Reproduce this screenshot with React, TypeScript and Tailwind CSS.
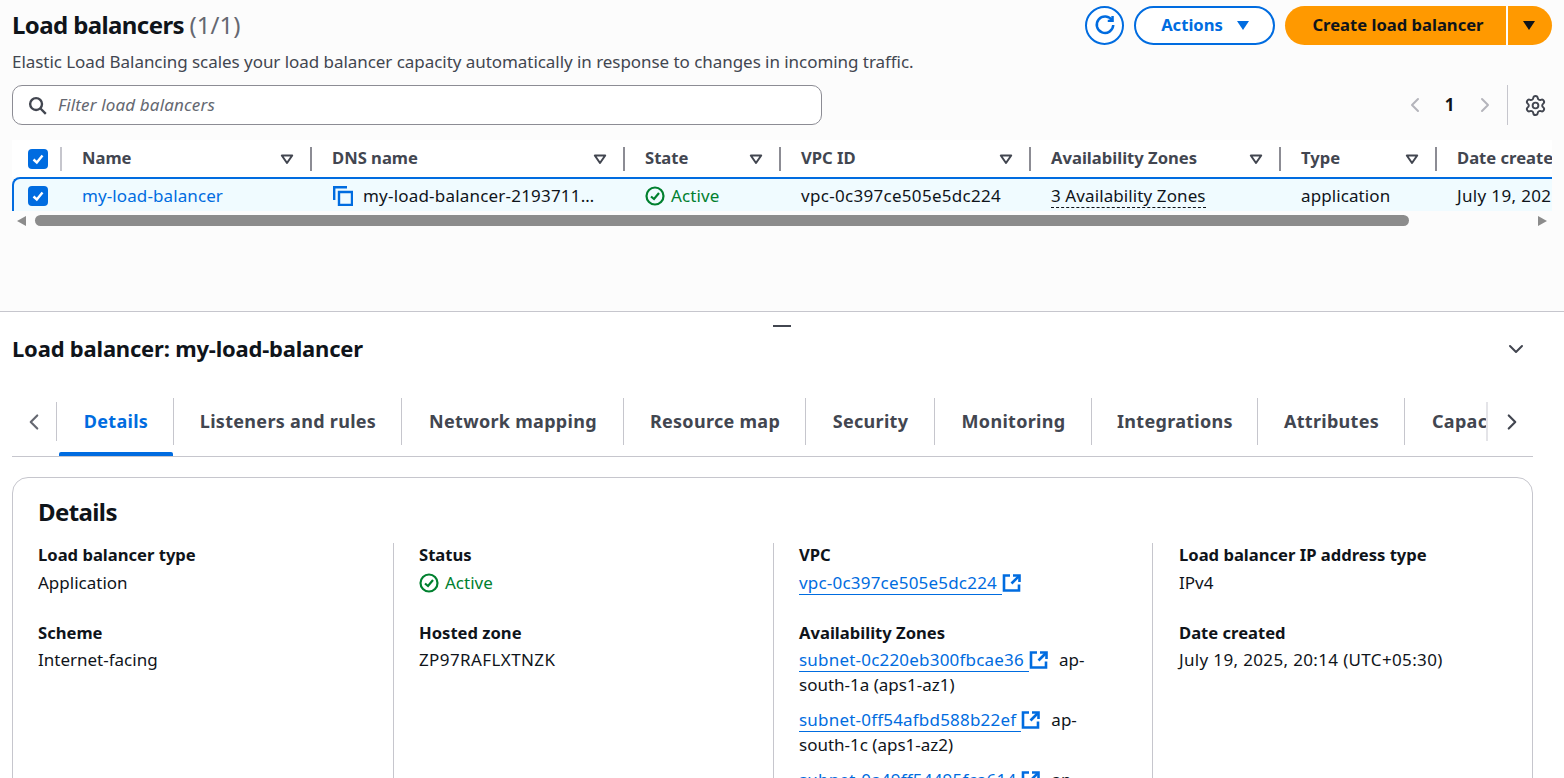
import { ChevronDown, ChevronLeft, ChevronRight, Settings } from "lucide-react";

const font = "font-['Noto_Sans',sans-serif]";

function Caret({ className }: { className?: string }) {
  return (
    <svg viewBox="0 0 16 16" className={className} fill="currentColor">
      <path d="M2 4h12L8 13z" />
    </svg>
  );
}

function SortIcon() {
  return (
    <svg viewBox="0 0 16 16" className="h-4 w-4 text-[#424650]" fill="none" stroke="currentColor" strokeWidth="2" strokeLinejoin="round">
      <path d="M2.8 4.5h10.4L8 12z" />
    </svg>
  );
}

function Check() {
  return (
    <span className="flex h-5 w-5 items-center justify-center rounded-[4px] bg-[#006ce0]">
      <svg viewBox="0 0 16 16" className="h-4 w-4" fill="none" stroke="white" strokeWidth="2.4">
        <path d="M3.5 8.5 6.8 11.5 12.5 4.5" />
      </svg>
    </span>
  );
}

function StatusActive() {
  return (
    <span className="flex items-center gap-[6px] text-[#00802f]">
      <svg viewBox="0 0 20 20" className="h-5 w-5" fill="none" stroke="currentColor" strokeWidth="2.2">
        <circle cx="10" cy="10" r="8.5" />
        <path d="M6 10.5 9 13l5-6" />
      </svg>
      Active
    </span>
  );
}

function External() {
  return (
    <svg viewBox="0 0 20 20" className="inline-block h-5 w-5 align-[-4px] text-[#006ce0]" fill="none" stroke="currentColor" strokeWidth="2.6">
      <path d="M8 2.5H2v15h15v-6" />
      <path d="M11 2.5h6.5V9" />
      <path d="M17 3 9.5 10.5" />
    </svg>
  );
}

function ExtLink({ text }: { text: string }) {
  return (
    <>
      <span className="border-b border-[#006ce0] tracking-[0.2px] text-[#006ce0]">{text} </span>
      <External />
    </>
  );
}

const headers = [
  { label: "Name", w: "w-[250px]" },
  { label: "DNS name", w: "w-[313px]" },
  { label: "State", w: "w-[156px]" },
  { label: "VPC ID", w: "w-[250px]" },
  { label: "Availability Zones", w: "w-[250px]" },
  { label: "Type", w: "w-[156px]" },
];

const tabs = [
  { label: "Listeners and rules", w: "w-[228px]" },
  { label: "Network mapping", w: "w-[222px]" },
  { label: "Resource map", w: "w-[182px]" },
  { label: "Security", w: "w-[129px]" },
  { label: "Monitoring", w: "w-[157px]" },
  { label: "Integrations", w: "w-[166px]" },
  { label: "Attributes", w: "w-[147px]" },
];

function Field({ label, first, children, className }: { label: string; first?: boolean; children: React.ReactNode; className?: string }) {
  return (
    <div className={className}>
      <div className={`${first ? "h-[27px]" : "h-[26px]"} text-[16.6px] font-bold leading-[24px] text-[#0f141a]`}>{label}</div>
      <div className="leading-[25px] text-[#0f141a]">{children}</div>
    </div>
  );
}

export default function App() {
  return (
    <div className={`${font} h-[778px] w-[1564px] overflow-hidden bg-white text-[17px] text-[#0f141a]`}>
      <section className="h-[312px] border-b border-[#c6c6cd] bg-[#fcfcfc] pl-3 pr-3">
        <div className="flex h-[51px] items-center justify-between pb-[1px]">
          <h1 className="text-[24px] font-bold tracking-[-0.6px]">
            Load balancers <span className="font-normal tracking-normal text-[#656871]">(1/1)</span>
          </h1>
          <div className="flex items-center text-[16.6px]">
            <span className="flex h-[39px] w-[39px] items-center justify-center rounded-full border-2 border-[#006ce0] bg-white text-[#006ce0]">
              <svg viewBox="0 0 16 16" className="h-[22px] w-[22px]" fill="none" stroke="currentColor" strokeWidth="1.8">
                <path d="M10 5h3.5V1.5" />
                <path d="M13.2 4.8A6 6 0 1 0 14 8" />
              </svg>
            </span>
            <span className="ml-[10px] flex h-[39px] w-[141px] items-center justify-center gap-[12px] rounded-full border-2 border-[#006ce0] bg-white pl-[3px] font-bold text-[#006ce0]">
              Actions
              <Caret className="h-4 w-4" />
            </span>
            <span className="ml-[10px] flex h-[39px] w-[221px] items-center justify-center rounded-l-full bg-[#ff9900] pl-[5px] font-bold">
              Create load balancer
            </span>
            <span className="ml-[2px] flex h-[39px] w-[44px] items-center justify-center rounded-r-full bg-[#ff9900]">
              <Caret className="mr-[2px] h-4 w-4" />
            </span>
          </div>
        </div>
        <p className="h-[22px] leading-[22px] tracking-[-0.05px] text-[#424650]">
          Elastic Load Balancing scales your load balancer capacity automatically in response to changes in incoming traffic.
        </p>
        <div className="mt-[6px] flex h-[52px] items-center">
          <div className="flex h-[40px] w-[810px] items-center gap-[11px] rounded-[10px] border border-[#8c8c94] bg-white pl-[15px]">
            <svg viewBox="0 0 16 16" className="h-[19px] w-[19px] text-[#424650]" fill="none" stroke="currentColor" strokeWidth="2">
              <circle cx="6.8" cy="6.8" r="5" />
              <path d="m10.5 10.5 4.5 4.5" />
            </svg>
            <span className="italic tracking-[0.15px] text-[#656871]">Filter load balancers</span>
          </div>
          <div className="ml-auto mr-[5px] flex items-center">
            <ChevronLeft className="h-6 w-6 text-[#b4b4bb]" />
            <span className="w-[45px] text-center font-bold">1</span>
            <ChevronRight className="ml-[1px] h-6 w-6 text-[#b4b4bb]" />
            <span className="ml-[10px] h-[40px] w-px bg-[#c6c6cd]" />
            <Settings className="ml-[16px] h-[23px] w-[23px] text-[#424650]" strokeWidth={2} />
          </div>
        </div>
        <div className="mt-[9px] w-[1540px] overflow-hidden">
          <div className="flex h-[37px] w-[1800px] items-center bg-white text-[16.6px]">
            <div className="flex h-[24px] w-[50px] shrink-0 items-center justify-between border-r-2 border-[#c6c6cd] pl-4">
              <Check />
              <span />
            </div>
            {headers.map((h) => (
              <div key={h.label} className={`${h.w} flex h-[24px] shrink-0 items-center justify-between border-r-2 border-[#8c8c94] pl-5 pr-[15px] font-bold text-[#424650]`}>
                {h.label}
                <SortIcon />
              </div>
            ))}
            <div className="whitespace-nowrap pl-5 font-bold text-[#424650]">Date created</div>
          </div>
          <div className="flex h-[34px] w-[1800px] items-center rounded-tl-[8px] border-l-2 border-t-2 border-[#006ce0] bg-[#f0fbff] pt-[1px] tracking-[0.1px]">
            <div className="w-[48px] shrink-0 pl-[14px]">
              <Check />
            </div>
            <div className="w-[250px] shrink-0 pl-5 text-[#006ce0]">my-load-balancer</div>
            <div className="flex w-[313px] shrink-0 items-center pl-[21px]">
              <svg viewBox="0 0 20 20" className="mr-[10px] h-5 w-5 shrink-0 text-[#006ce0]" fill="none" stroke="currentColor" strokeWidth="2.4">
                <path d="M1.2 14V1.2H14" />
                <path d="M6 6h13v13H6z" />
              </svg>
              <span className="w-[237px] truncate tracking-[0.2px]">my-load-balancer-2193711234.ap-south-1.elb.amazonaws.com</span>
            </div>
            <div className="w-[156px] shrink-0 pl-5">
              <StatusActive />
            </div>
            <div className="w-[250px] shrink-0 pl-5 tracking-[0.3px]">vpc-0c397ce505e5dc224</div>
            <div className="w-[250px] shrink-0 pl-5">
              <span className="border-b border-dashed border-[#0f141a]">3 Availability Zones</span>
            </div>
            <div className="w-[156px] shrink-0 pl-5">application</div>
            <div className="whitespace-nowrap pl-5 tracking-[0.35px]">July 19, 2025, 20:14 (UTC+05:30)</div>
          </div>
          <div className="mt-[4px] flex h-[11px] w-[1540px] items-center">
            <span className="ml-[5px] h-0 w-0 border-y-[5px] border-r-[9px] border-y-transparent border-r-[#8c8c8c]" />
            <span className="ml-[9px] h-[11px] w-[1374px] rounded-full bg-[#8c8c8c]" />
            <span className="ml-auto mr-[5px] h-0 w-0 border-y-[5px] border-l-[9px] border-y-transparent border-l-[#8c8c8c]" />
          </div>
        </div>
      </section>

      <section className="pl-3">
        <div className="flex h-[14px] justify-center pr-3">
          <span className="mt-[13px] h-[2px] w-[18px] bg-[#424650]" />
        </div>
        <div className="flex h-[47px] items-center justify-between pb-[2px] pr-[36px]">
          <h2 className="text-[22px] font-bold tracking-[-0.2px]">Load balancer: my-load-balancer</h2>
          <ChevronDown className="h-6 w-6 text-[#424650]" />
        </div>
        <div className="mt-[25px] flex h-[59px] w-[1521px] items-start border-b border-[#c6c6cd] text-[18px] tracking-[0.3px]">
          <div className="mt-[4px] flex h-[39px] w-[45px] items-center justify-center border-r border-[#c6c6cd] pr-[1px]">
            <ChevronLeft className="h-[26px] w-[26px] text-[#656871]" />
          </div>
          <div className="relative flex h-[47px] w-[117px] items-center justify-center border-r border-[#c6c6cd] pb-[1px] pl-[2px] font-bold text-[#006ce0]">
            Details
            <span className="absolute bottom-[-11px] left-[2px] right-0 h-1 rounded-t-[2px] bg-[#006ce0]" />
          </div>
          {tabs.map((t) => (
            <div key={t.label} className={`${t.w} flex h-[47px] items-center justify-center border-r border-[#c6c6cd] pb-[1px] pl-[1px] font-bold text-[#424650]`}>
              {t.label}
            </div>
          ))}
          <div className="mt-[4px] flex h-[39px] w-[83px] items-center overflow-hidden border-r-2 border-[#e4e4e8] pl-[27px] font-bold text-[#424650]">Capacity</div>
          <div className="mt-[4px] flex h-[39px] flex-1 items-center pl-[11px]">
            <ChevronRight className="h-[26px] w-[26px] text-[#424650]" />
          </div>
        </div>
        <div className="mt-5 h-[400px] w-[1521px] rounded-t-[16px] border border-[#c6c6cd] bg-white pl-[25px] pt-[19px]">
          <h3 className="h-[46px] text-[24px] font-bold leading-[30px] tracking-[-0.6px]">Details</h3>
          <div className="flex h-[300px]">
            <div className="w-[355px]">
              <Field first label="Load balancer type" className="h-[78px]">Application</Field>
              <Field label="Scheme">Internet-facing</Field>
            </div>
            <div className="w-[380px] border-l border-[#c6c6cd] pl-[25px]">
              <Field first label="Status" className="h-[78px]"><StatusActive /></Field>
              <Field label="Hosted zone"><span className="tracking-[0.4px]">ZP97RAFLXTNZK</span></Field>
            </div>
            <div className="w-[379px] border-l border-[#c6c6cd] pl-[25px] pr-[60px]">
              <Field first label="VPC" className="h-[78px]"><ExtLink text="vpc-0c397ce505e5dc224" /></Field>
              <Field label="Availability Zones">
                <div className="mb-[10px]"><ExtLink text="subnet-0c220eb300fbcae36" /> <span className="ml-[6px]">ap-south-1a (aps1-az1)</span></div>
                <div className="mb-[10px]"><ExtLink text="subnet-0ff54afbd588b22ef" /> <span className="ml-[6px]">ap-south-1c (aps1-az2)</span></div>
                <div><ExtLink text="subnet-0a49ff54495fca614" /> <span className="ml-[6px]">ap-south-1b (aps1-az3)</span></div>
              </Field>
            </div>
            <div className="flex-1 border-l border-[#c6c6cd] pl-[26px]">
              <Field first label="Load balancer IP address type" className="h-[78px]">IPv4</Field>
              <Field label="Date created"><span className="tracking-[0.35px]">July 19, 2025, 20:14 (UTC+05:30)</span></Field>
            </div>
          </div>
        </div>
      </section>
    </div>
  );
}
